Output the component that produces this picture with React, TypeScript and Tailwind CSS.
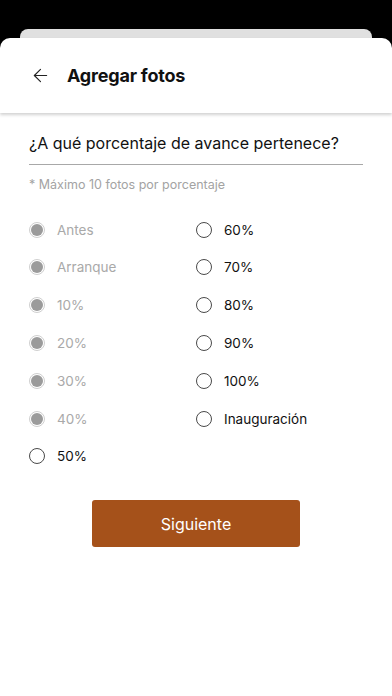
import { ArrowLeft } from 'lucide-react';

const leftOptions = [
  { label: 'Antes', done: true },
  { label: 'Arranque', done: true },
  { label: '10%', done: true },
  { label: '20%', done: true },
  { label: '30%', done: true },
  { label: '40%', done: true },
  { label: '50%', done: false },
];

const rightOptions = [
  { label: '60%', done: false },
  { label: '70%', done: false },
  { label: '80%', done: false },
  { label: '90%', done: false },
  { label: '100%', done: false },
  { label: 'Inauguración', done: false },
];

function Option({ label, done }: { label: string; done: boolean }) {
  return (
    <div className="flex items-center h-[37.8px] gap-[12px]">
      {done ? (
        <span className="w-[16px] h-[16px] rounded-full border border-[#cfcfcf] flex items-center justify-center">
          <span className="w-[12px] h-[12px] rounded-full bg-[#9b9b9b]" />
        </span>
      ) : (
        <span className="w-[16px] h-[16px] rounded-full border border-[#4a4a4a] bg-white" />
      )}
      <span className={`text-[13.5px] ${done ? 'text-[#a9a9a9]' : 'text-[#111]'}`}>{label}</span>
    </div>
  );
}

export default function App() {
  return (
    <div className="min-h-[696px] bg-black flex flex-col font-['Inter',sans-serif]">
      {/* Stacked sheet behind */}
      <div className="h-[29px]" />
      <div className="mx-[20px] h-[9px] rounded-t-[8px] bg-[#e0e0e0]" />

      {/* Sheet */}
      <div className="flex-1 bg-white rounded-t-[10px] flex flex-col">
        <header className="h-[75px] flex items-center px-[30px] gap-[16px] shadow-[0_2px_3px_rgba(0,0,0,0.18)]">
          <ArrowLeft className="w-[21px] h-[21px] text-[#222]" strokeWidth={1.3} />
          <h1 className="text-[18px] font-bold text-[#111] tracking-[-0.2px]">Agregar fotos</h1>
        </header>

        <div className="px-[29px] pt-[18px]">
          <p className="text-[16px] text-[#111] pb-[9px] border-b border-[#a8a8a8]">
            ¿A qué porcentaje de avance pertenece?
          </p>
          <p className="text-[12.5px] text-[#a3a3a3] mt-[11px]">* Máximo 10 fotos por porcentaje</p>

          <div className="grid grid-cols-2 mt-[16px]">
            <div className="flex flex-col">
              {leftOptions.map((o) => (
                <Option key={o.label} {...o} />
              ))}
            </div>
            <div className="flex flex-col">
              {rightOptions.map((o) => (
                <Option key={o.label} {...o} />
              ))}
            </div>
          </div>

          <div className="flex justify-center mt-[25px]">
            <button className="w-[208px] h-[47px] rounded-[3px] bg-[#a5511a] text-white text-[16px]">
              Siguiente
            </button>
          </div>
        </div>
      </div>
    </div>
  );
}
